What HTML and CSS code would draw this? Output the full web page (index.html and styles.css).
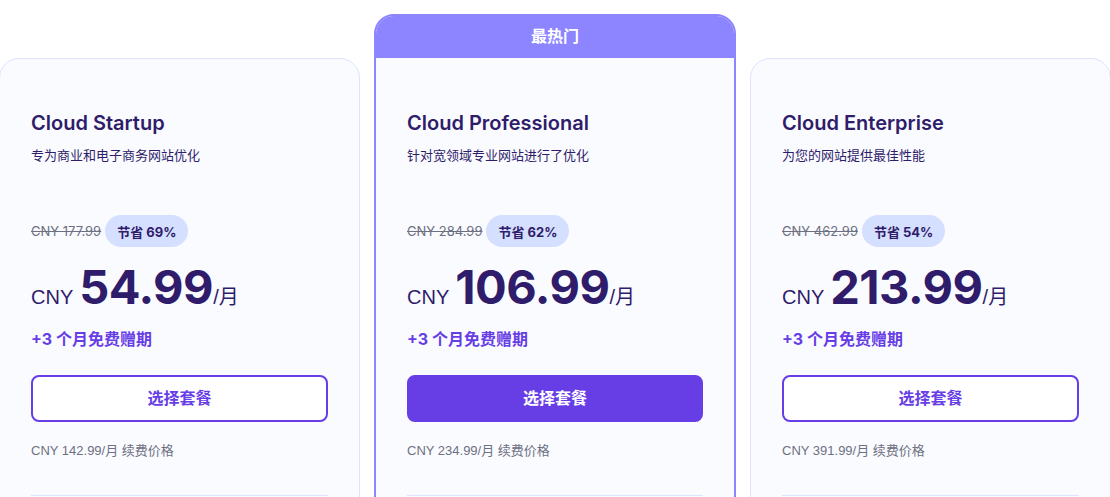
FILE: index.html
```html
<!DOCTYPE html>
<html lang="zh">

<head>
  <meta charset="UTF-8">
  <meta name="viewport" content="width=device-width, initial-scale=1.0">
  <title>云主机套餐</title>
  <link rel="stylesheet" href="styles.css">
</head>

<body>
  <div class="plans">
    <!-- 入门 -->
    <div class="plan">
      <div class="plan-body">
        <h3 class="plan-title">Cloud Startup</h3>
        <p class="plan-desc">专为商业和电子商务网站优化</p>
        <div class="old-price-row">
          <span class="old-price">CNY 177.99</span>
          <span class="save-badge">节省 69%</span>
        </div>
        <div class="price">
          <span class="currency">CNY</span>
          <span class="amount">54.99</span>
          <span class="period">/月</span>
        </div>
        <div class="bonus">+3 个月免费赠期</div>
        <button class="select-btn">选择套餐</button>
        <p class="renew">CNY 142.99/月 续费价格</p>
        <div class="divider"></div>
      </div>
    </div>

    <!-- 最热门 -->
    <div class="plan plan-hot">
      <div class="plan-label">最热门</div>
      <div class="plan-body">
        <h3 class="plan-title">Cloud Professional</h3>
        <p class="plan-desc">针对宽领域专业网站进行了优化</p>
        <div class="old-price-row">
          <span class="old-price">CNY 284.99</span>
          <span class="save-badge">节省 62%</span>
        </div>
        <div class="price">
          <span class="currency">CNY</span>
          <span class="amount">106.99</span>
          <span class="period">/月</span>
        </div>
        <div class="bonus">+3 个月免费赠期</div>
        <button class="select-btn select-btn-filled">选择套餐</button>
        <p class="renew">CNY 234.99/月 续费价格</p>
        <div class="divider"></div>
      </div>
    </div>

    <!-- 企业 -->
    <div class="plan">
      <div class="plan-body">
        <h3 class="plan-title">Cloud Enterprise</h3>
        <p class="plan-desc">为您的网站提供最佳性能</p>
        <div class="old-price-row">
          <span class="old-price">CNY 462.99</span>
          <span class="save-badge">节省 54%</span>
        </div>
        <div class="price">
          <span class="currency">CNY</span>
          <span class="amount">213.99</span>
          <span class="period">/月</span>
        </div>
        <div class="bonus">+3 个月免费赠期</div>
        <button class="select-btn">选择套餐</button>
        <p class="renew">CNY 391.99/月 续费价格</p>
        <div class="divider"></div>
      </div>
    </div>
  </div>
</body>

</html>
```

FILE: styles.css
```css
:root {
  --navy: #2f1c6a;
  --purple: #673de6;
  --purple-light: #8c85ff;
  --gray: #6d7081;
  --blue-light: #d5dfff;
  --card-bg: #fafbff;
}

* {
  margin: 0;
  padding: 0;
  box-sizing: border-box;
}

body {
  font-family: 'Inter', 'Noto Sans CJK SC', sans-serif;
  background: #fff;
  color: var(--navy);
  height: 497px;
  overflow: hidden;
}

.plans {
  display: flex;
  align-items: flex-start;
  gap: 14px;
  padding-top: 14px;
  margin-left: -1px;
}

/* 套餐卡片 */
.plan {
  width: 361px;
  flex-shrink: 0;
  margin-top: 44px;
  background: var(--card-bg);
  border: 1px solid #dde4fe;
  border-radius: 20px;
  overflow: hidden;
}

.plan-hot {
  width: 362px;
  margin-top: 0;
  border: 2px solid var(--purple-light);
}

.plan-label {
  height: 42px;
  padding-bottom: 4px;
  background: var(--purple-light);
  color: #fff;
  font-size: 16px;
  font-weight: 700;
  display: flex;
  align-items: center;
  justify-content: center;
}

.plan-body {
  padding: 50px 31px 60px;
}

.plan-hot .plan-body {
  padding-top: 51px;
}

.plan-title {
  font-size: 20px;
  line-height: 28px;
  font-weight: 600;
  color: var(--navy);
}

.plan-desc {
  margin-top: 8px;
  font-size: 13px;
  line-height: 20px;
}

/* 价格 */
.old-price-row {
  margin-top: 50px;
  display: flex;
  align-items: center;
  gap: 4px;
}

.old-price {
  font-size: 13px;
  color: var(--gray);
  text-decoration: line-through;
}

.save-badge {
  background: var(--blue-light);
  color: var(--navy);
  font-size: 13px;
  font-weight: 700;
  height: 32px;
  padding: 0 12px;
  border-radius: 16px;
  display: flex;
  align-items: center;
}

.price {
  margin-top: 21px;
  display: flex;
  align-items: baseline;
  line-height: 38px;
}

.currency {
  font-family: 'Liberation Sans', 'Noto Sans CJK SC', sans-serif;
  font-size: 20px;
  margin-right: 6px;
}

.amount {
  font-size: 47px;
  font-weight: 700;
  letter-spacing: -0.5px;
}

.period {
  font-family: 'Liberation Sans', 'Noto Sans CJK SC', sans-serif;
  font-size: 20px;
}

.bonus {
  margin-top: 11px;
  font-size: 16px;
  line-height: 24px;
  font-weight: 700;
  color: var(--purple);
}

/* 按钮 */
.select-btn {
  display: block;
  width: 100%;
  height: 47px;
  margin-top: 24px;
  padding-bottom: 3px;
  border: 2px solid var(--purple);
  border-radius: 8px;
  background: #fff;
  color: var(--purple);
  font-family: 'Inter', 'Noto Sans CJK SC', sans-serif;
  font-size: 16px;
  font-weight: 700;
  cursor: pointer;
}

.select-btn-filled {
  background: var(--purple);
  color: #fff;
}

.renew {
  margin-top: 19px;
  font-family: 'Liberation Sans', 'Noto Sans CJK SC', sans-serif;
  font-size: 13px;
  line-height: 20px;
  color: var(--gray);
}

.divider {
  margin-top: 34px;
  height: 1px;
  background: #dde4fe;
}
```
